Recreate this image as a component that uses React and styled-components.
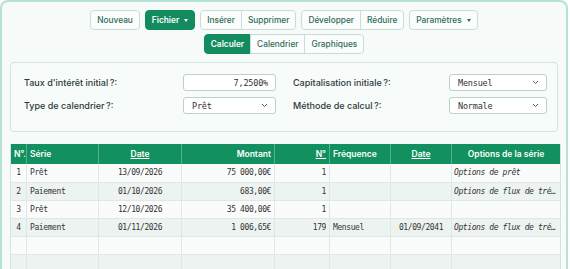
import React from 'react';
import styled, { createGlobalStyle } from 'styled-components';

const GlobalStyle = createGlobalStyle`
  html, body {
    margin: 0;
    padding: 0;
    background: #ffffff;
  }
  body {
    font-family: Inter, "Noto Sans", sans-serif;
    color: #2b3a35;
  }
`;

const Card = styled.div`
  width: 568px;
  min-height: 300px;
  box-sizing: border-box;
  border: 2px solid #b6e3d3;
  border-bottom: none;
  border-radius: 8px 8px 0 0;
  background: #f6fbfa;
  padding: 8px 8px 0 8px;
`;

const Toolbar = styled.div`
  display: flex;
  flex-direction: column;
  align-items: center;
  gap: 4px;
`;

const ToolRow = styled.div`
  display: flex;
  gap: 5px;
  justify-content: center;
`;

const Group = styled.div`
  display: flex;
  & > button {
    border-radius: 0;
  }
  & > button + button {
    margin-left: -1px;
  }
  & > button:first-child {
    border-radius: 4px 0 0 4px;
  }
  & > button:last-child {
    border-radius: 0 4px 4px 0;
  }
`;

const Button = styled.button`
  height: 20px;
  box-sizing: border-box;
  padding: 0 6px;
  font-family: Inter, "Noto Sans", sans-serif;
  font-size: 8.3px;
  font-weight: ${p => (p.$active ? 600 : 500)};
  color: ${p => (p.$active ? '#ffffff' : '#2f6b56')};
  background: ${p => (p.$active ? '#128b5f' : '#fbfdfc')};
  border: 1px solid ${p => (p.$active ? '#128b5f' : '#c9ddd5')};
  border-radius: 4px;
  display: flex;
  align-items: center;
  gap: 5px;
  cursor: pointer;
`;

const Caret = styled.span`
  width: 0;
  height: 0;
  border-left: 2.5px solid transparent;
  border-right: 2.5px solid transparent;
  border-top: 3px solid currentColor;
`;

const Panel = styled.div`
  margin: 8px 0 0 0;
  border: 1px solid #d3e4de;
  border-radius: 4px;
  background: #f7fbfa;
  padding: 11px 12px 17px 13px;
  display: grid;
  grid-template-columns: 159px 93px 173px 98px;
  row-gap: 6px;
  & > :nth-child(4n + 3) {
    margin-left: 17px;
  }
`;

const Label = styled.label`
  font-size: 9px;
  font-weight: 500;
  color: #2d3a36;
  display: flex;
  align-items: center;
  height: 17px;
`;

const Field = styled.div`
  height: 17px;
  box-sizing: border-box;
  border: 1px solid #bcd2c9;
  border-radius: 3px;
  background: #ffffff;
  font-family: "DejaVu Sans Mono", monospace;
  font-size: 8.5px;
  letter-spacing: -0.2px;
  color: #333;
  display: flex;
  align-items: center;
  justify-content: ${p => (p.$right ? 'flex-end' : 'space-between')};
  padding: 0 7px 0 8px;
`;

const Chevron = () => (
  <svg width="7" height="5" viewBox="0 0 7 5">
    <path d="M1 1l2.5 2.5L6 1" fill="none" stroke="#555" strokeWidth="0.9" />
  </svg>
);

const Table = styled.table`
  margin-top: 12px;
  width: 550px;
  border-collapse: collapse;
  table-layout: fixed;
  font-family: "DejaVu Sans Mono", monospace;
  font-size: 8px;
  letter-spacing: -0.4px;
  color: #333;
  border-left: 1px solid #d6e4df;
  border-right: 1px solid #d6e4df;
`;

const Th = styled.th`
  height: 20px;
  padding: 0 3px;
  background: #12905f;
  color: #ffffff;
  font-family: Inter, "Noto Sans", sans-serif;
  font-size: 8.5px;
  font-weight: 600;
  letter-spacing: 0;
  text-align: ${p => p.$align || 'left'};
  text-decoration: ${p => (p.$link ? 'underline' : 'none')};
  border-left: 1px solid #4fb38b;
  white-space: nowrap;
  overflow: hidden;
  &:first-child {
    border-left: none;
  }
`;

const Tr = styled.tr`
  background: ${p => (p.$odd ? '#edf3f1' : '#fafcfb')};
`;

const Td = styled.td`
  height: 18px;
  box-sizing: border-box;
  padding: 0 3px;
  border: 1px solid #dfe8e5;
  border-top: none;
  text-align: ${p => p.$align || 'left'};
  font-style: ${p => (p.$italic ? 'italic' : 'normal')};
  &:first-child {
    border-left: none;
  }
  &:last-child {
    border-right: none;
    padding: 0 2px;
  }
`;

const Cut = styled.span`
  display: block;
  white-space: nowrap;
  overflow: hidden;
`;

const NB = '\u202F';

const rows = [
  ['1', 'Prêt', '13/09/2026', '75 000,00€', '1', '', '', 'Options de prêt'],
  ['2', 'Paiement', '01/10/2026', '683,00€', '1', '', '', 'Options de flux de tré…'],
  ['3', 'Prêt', '12/10/2026', '35 400,00€', '1', '', '', ''],
  ['4', 'Paiement', '01/11/2026', '1 006,65€', '179', 'Mensuel', '01/09/2041', 'Options de flux de tré…'],
  ['', '', '', '', '', '', '', ''],
  ['', '', '', '', '', '', '', ''],
];

const aligns = ['center', 'left', 'center', 'right', 'right', 'left', 'center', 'left'];

const App = () => (
  <>
    <GlobalStyle />
    <Card>
      <Toolbar>
        <ToolRow>
          <Button>Nouveau</Button>
          <Button $active>
            Fichier <Caret />
          </Button>
          <Group>
            <Button>Insérer</Button>
            <Button>Supprimer</Button>
          </Group>
          <Group>
            <Button>Développer</Button>
            <Button>Réduire</Button>
          </Group>
          <Button>
            Paramètres <Caret />
          </Button>
        </ToolRow>
        <ToolRow>
          <Group>
            <Button $active>Calculer</Button>
            <Button>Calendrier</Button>
            <Button>Graphiques</Button>
          </Group>
        </ToolRow>
      </Toolbar>

      <Panel>
        <Label>Taux d'intérêt initial{NB}?:</Label>
        <Field $right>7,2500%</Field>
        <Label>Capitalisation initiale{NB}?:</Label>
        <Field>
          Mensuel <Chevron />
        </Field>
        <Label>Type de calendrier{NB}?:</Label>
        <Field>
          Prêt <Chevron />
        </Field>
        <Label>Méthode de calcul{NB}?:</Label>
        <Field>
          Normale <Chevron />
        </Field>
      </Panel>

      <Table>
        <colgroup>
          <col style={{ width: 16 }} />
          <col style={{ width: 72 }} />
          <col style={{ width: 83 }} />
          <col style={{ width: 93 }} />
          <col style={{ width: 55 }} />
          <col style={{ width: 61 }} />
          <col style={{ width: 61 }} />
          <col style={{ width: 109 }} />
        </colgroup>
        <thead>
          <tr>
            <Th $align="center">N°.</Th>
            <Th>Série</Th>
            <Th $align="center" $link>Date</Th>
            <Th $align="right">Montant</Th>
            <Th $align="right" $link>N°</Th>
            <Th>Fréquence</Th>
            <Th $align="center" $link>Date</Th>
            <Th $align="center">Options de la série</Th>
          </tr>
        </thead>
        <tbody>
          {rows.map((r, i) => (
            <Tr key={i} $odd={i % 2 === 1}>
              {r.map((c, j) => (
                <Td key={j} $align={aligns[j]} $italic={j === 7}>
                  <Cut>{c || '\u00A0'}</Cut>
                </Td>
              ))}
            </Tr>
          ))}
        </tbody>
      </Table>
    </Card>
  </>
);

export default App;
